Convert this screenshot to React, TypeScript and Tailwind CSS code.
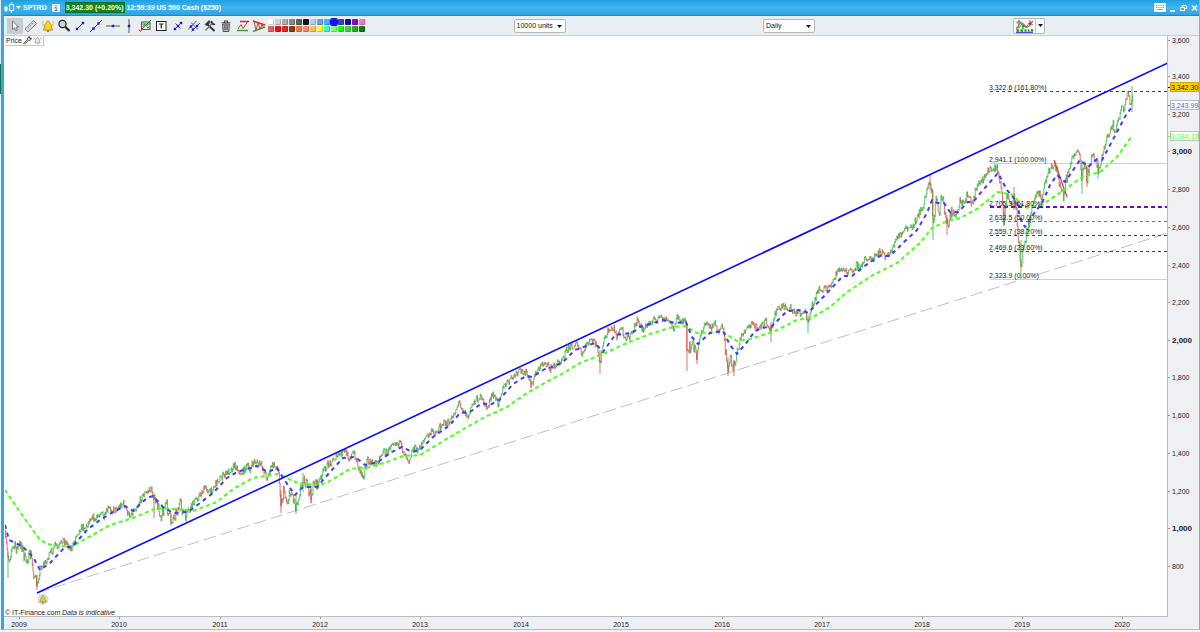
import type { ReactNode } from "react";

type Point = [number, number];

const closes: Point[] = [
  [5, 537], [7, 548], [9, 560], [11, 550], [15, 547], [18, 549], [21, 542], [25, 561], [31, 555], [33, 570], [37, 587], [40, 568],
  [45, 563], [49, 556], [55, 545], [58, 549], [63, 539], [72, 549], [77, 533], [82, 527], [86, 527], [92, 515],
  [95, 521], [101, 511], [104, 519], [108, 509], [115, 510], [123, 503], [129, 516], [137, 506], [143, 495], [151, 489],
  [154, 498], [161, 515], [166, 504], [171, 521], [180, 505], [186, 518], [193, 503], [200, 495], [206, 487],
  [210, 493], [218, 480], [227, 473], [235, 465], [241, 474], [247, 466], [250, 470], [254, 461], [262, 466],
  [267, 478], [272, 465], [277, 467], [279, 474], [281, 505], [284, 490], [287, 502], [291, 491], [296, 506],
  [303, 478], [307, 487], [311, 497], [315, 479], [317, 486], [325, 468], [335, 458], [345, 451], [349, 458],
  [354, 453], [359, 469], [363, 474], [367, 463], [377, 463], [383, 451], [388, 453], [392, 441], [400, 444],
  [404, 452], [409, 460], [413, 448], [419, 450], [423, 440], [432, 432], [437, 432], [442, 423], [450, 423],
  [459, 402], [463, 409], [468, 418], [473, 402], [480, 397], [487, 408], [493, 394], [498, 403], [503, 388],
  [510, 380], [520, 371], [526, 372], [531, 386], [537, 370], [545, 362], [550, 369], [560, 361], [567, 349], [577, 344],
  [582, 356], [587, 343], [593, 340], [597, 348], [600, 364], [603, 344], [608, 331], [614, 327], [617, 338],
  [621, 327], [625, 337], [630, 337], [637, 321], [643, 330], [650, 322], [660, 318], [670, 322], [674, 328],
  [677, 318], [686, 323], [687, 357], [690, 347], [693, 344], [697, 358], [700, 334], [707, 322], [710, 328],
  [715, 322], [719, 335], [723, 324], [725, 350], [728, 366], [731, 357], [733, 369], [737, 352], [742, 334],
  [753, 323], [758, 330], [766, 321], [771, 330], [775, 312], [783, 306], [790, 308], [795, 313], [805, 313],
  [808, 321], [813, 303], [818, 290], [830, 288], [838, 269], [848, 273], [857, 265], [860, 270], [865, 258],
  [873, 260], [880, 251], [887, 258], [898, 237], [905, 230], [912, 228], [918, 215], [923, 207], [927, 190],
  [930, 179], [932, 193], [933, 227], [936, 200], [939, 213], [942, 194], [947, 226], [952, 210], [956, 220],
  [960, 203], [965, 205], [967, 193], [972, 205], [977, 185], [983, 180], [988, 171], [997, 167], [1000, 183],
  [1002, 200], [1004, 219], [1007, 194], [1012, 207], [1014, 195], [1017, 217], [1019, 247], [1021, 272],
  [1023, 250], [1027, 230], [1031, 213], [1037, 190], [1042, 197], [1047, 174], [1054, 163], [1058, 177],
  [1063, 196], [1067, 177], [1073, 156], [1079, 149], [1082, 178], [1084, 161], [1087, 180], [1092, 154],
  [1099, 170], [1105, 144], [1113, 124], [1115, 132], [1122, 107], [1124, 112], [1128, 91], [1131, 108], [1133, 90],
];

const turbulent: Point[] = [[5, 36], [158, 190], [280, 318], [359, 368], [687, 700], [724, 738], [931, 960], [1000, 1030], [1056, 1068], [1081, 1100]];

const spikes: [number, number, number, "up" | "down"][] = [
  [8, 552, 578, "up"], [37, 575, 590, "down"], [154, 495, 518, "down"], [171, 515, 526, "up"], [281, 490, 513, "down"],
  [296, 495, 514, "up"], [303, 473, 492, "up"], [311, 485, 500, "down"], [600, 350, 374, "down"], [687, 325, 371, "down"],
  [697, 350, 364, "down"], [728, 358, 376, "down"], [734, 360, 376, "down"], [808, 315, 333, "up"], [771, 322, 342, "down"],
  [933, 190, 240, "up"], [947, 215, 235, "down"], [1021, 240, 279, "up"], [1014, 187, 210, "down"], [1082, 160, 194, "up"],
  [1087, 165, 187, "down"], [1098, 160, 179, "up"], [1004, 205, 226, "down"], [930, 175, 190, "down"], [1132, 86, 112, "up"],
];

const fastAverage: Point[] = [
  [5, 525], [9, 540], [22, 546], [33, 557], [40, 570], [50, 563], [65, 547], [72, 547], [87, 530], [100, 520],
  [113, 512], [125, 506], [133, 511], [147, 498], [153, 496], [163, 507], [173, 513], [188, 512], [200, 503],
  [213, 493], [227, 478], [237, 472], [257, 466], [268, 472], [277, 468], [283, 478], [295, 495], [303, 487],
  [317, 487], [330, 472], [343, 458], [355, 457], [365, 465], [378, 462], [390, 453], [402, 447], [412, 452],
  [420, 450], [433, 437], [450, 425], [460, 413], [470, 412], [482, 403], [490, 405], [499, 400], [513, 384],
  [526, 376], [532, 377], [545, 369], [553, 367], [563, 362], [575, 350], [595, 343], [603, 352], [615, 335], [632, 333],
  [640, 327], [663, 320], [675, 323], [686, 322], [692, 337], [698, 344], [710, 333], [723, 331], [730, 345],
  [737, 354], [747, 342], [755, 331], [763, 328], [772, 326], [787, 311], [802, 310], [808, 313], [827, 293],
  [843, 276], [852, 276], [863, 267], [880, 256], [890, 256], [903, 243], [917, 230], [927, 213], [932, 200],
  [937, 203], [944, 203], [950, 212], [958, 212], [968, 202], [973, 202], [983, 190], [998, 173], [1007, 190],
  [1017, 202], [1020, 218], [1025, 227], [1035, 212], [1042, 203], [1050, 185], [1057, 175], [1065, 182],
  [1080, 160], [1088, 167], [1097, 159], [1102, 160], [1117, 132], [1127, 113], [1133, 106],
];

const slowAverage: Point[] = [
  [5, 490], [20, 512], [40, 540], [53, 546], [73, 546], [87, 538], [110, 525], [133, 518], [157, 508], [173, 509],
  [193, 511], [217, 502], [233, 489], [253, 478], [278, 474], [300, 484], [320, 485], [328, 482], [350, 469],
  [370, 467], [387, 462], [403, 456], [420, 455], [440, 443], [467, 427], [487, 416], [507, 407], [527, 393],
  [548, 381], [560, 375], [580, 363], [603, 354], [627, 343], [650, 334], [673, 327], [685, 326], [697, 333],
  [723, 332], [737, 341], [750, 339], [773, 332], [797, 320], [813, 317], [830, 307], [847, 292], [873, 275],
  [897, 263], [920, 243], [932, 228], [947, 221], [960, 218], [977, 209], [998, 192], [1013, 195], [1025, 208],
  [1043, 204], [1067, 188], [1082, 177], [1100, 172], [1117, 157], [1132, 136],
];

const toPath = (pts: Point[]) => pts.map(([x, y], i) => `${i ? "L" : "M"}${x} ${y}`).join("");

function buildBars() {
  let seed = 7;
  const rand = () => {
    seed = (seed * 16807) % 2147483647;
    return seed / 2147483647;
  };
  let up = "";
  let down = "";
  let segment = 0;
  let previous = closes[0][1];
  for (let x = 5; x < 1133; x += 0.7) {
    while (segment < closes.length - 2 && closes[segment + 1][0] < x) segment++;
    const [x0, y0] = closes[segment];
    const [x1, y1] = closes[segment + 1];
    const base = y0 + ((y1 - y0) * (x - x0)) / (x1 - x0);
    const swing = turbulent.some(([from, to]) => x >= from && x <= to) ? 12 : 7;
    const close = base + (rand() - 0.5) * swing;
    const high = Math.min(previous, close) - rand() * 1.5;
    const low = Math.max(previous, close) + rand() * 1.5;
    const bar = `M${x.toFixed(1)} ${high.toFixed(1)}V${low.toFixed(1)}`;
    if (close < previous) up += bar;
    else down += bar;
    previous = close;
  }
  for (const [x, top, bottom, direction] of spikes) {
    const bar = `M${x} ${top}V${bottom}`;
    if (direction === "up") up += bar;
    else down += bar;
  }
  return { up, down };
}

const bars = buildBars();

const levels = [
  { y: 91, label: "3,322.6 (161.80%)", stroke: "#444444", dash: "3 3", width: 1 },
  { y: 163, label: "2,941.1 (100.00%)", stroke: "#cfcfcf", dash: undefined, width: 1 },
  { y: 207, label: "2,705.3 (61.80%)", stroke: "#8000c0", dash: "4 3", width: 2 },
  { y: 221, label: "2,632.5 (50.00%)", stroke: "#ff3a3a", dash: "3 3", width: 1 },
  { y: 235, label: "2,559.7 (38.20%)", stroke: "#444444", dash: "3 3", width: 1 },
  { y: 251, label: "2,469.6 (23.60%)", stroke: "#444444", dash: "3 3", width: 1 },
  { y: 279, label: "2,323.9 (0.00%)", stroke: "#cfcfcf", dash: undefined, width: 1 },
];

const prices: [string, number][] = [
  ["3,600", 40], ["3,400", 76], ["3,200", 114], ["3,000", 151], ["2,800", 189], ["2,600", 227], ["2,400", 265],
  ["2,200", 302], ["2,000", 340], ["1,800", 377], ["1,600", 415], ["1,400", 453], ["1,200", 491], ["1,000", 528],
  ["800", 566],
];

const years: [string, number][] = [
  ["2009", 19], ["2010", 119], ["2011", 220], ["2012", 320], ["2013", 420], ["2014", 521], ["2015", 621],
  ["2016", 722], ["2017", 822], ["2018", 922], ["2019", 1022], ["2020", 1122],
];

const tags = [
  { y: 87, label: "3,342.30", fill: "#ffcc00", border: "#d9a900", text: "#222222" },
  { y: 105, label: "3,243.99", fill: "#f8f8ff", border: "#b8bcc4", text: "#6464ff" },
  { y: 136, label: "3,084.12", fill: "#fbfff8", border: "#b8c4b8", text: "#5cff28" },
];

function Chart() {
  return (
    <svg viewBox="4 36 1195 593" className="block h-auto w-full bg-[#eef0f3]" role="img" aria-label="US 500 Cash daily price chart">
      <defs>
        <clipPath id="plot"><rect x="5" y="36" width="1162" height="580" /></clipPath>
      </defs>
      <rect x="4" y="36" width="1163" height="580" fill="#ffffff" />
      <path d="M1167.500 36V616.500H4" fill="none" stroke="#b9bdc1" />
      <g clipPath="url(#plot)" fill="none">
        <path d="M37 593L1168 233" stroke="#bfbfbf" strokeDasharray="12.5 5" />
        {levels.map((l) => (
          <path key={l.y} d={`M990 ${l.width === 1 ? l.y + 0.5 : l.y}H1167`} stroke={l.stroke} strokeWidth={l.width} strokeDasharray={l.dash} />
        ))}
        <path d={bars.down} stroke="#d83030" strokeWidth="0.7" />
        <path d={bars.up} stroke="#14b028" strokeWidth="0.7" />
        <path d="M1054 160L1067 197" stroke="#e03a3a" strokeWidth="1.2" />
        <path d={toPath(slowAverage)} stroke="#4dff1a" strokeWidth="2" strokeDasharray="4 3" strokeLinejoin="round" />
        <path d={toPath(fastAverage)} stroke="#3c3cff" strokeWidth="2" strokeDasharray="4 4" strokeLinejoin="round" />
        <path d="M37 593L1168 63" stroke="#0a0aff" strokeWidth="1.600" />
      </g>
      <g className="text-[7px]" fill="#222222">
        {levels.map((l) => (
          <text key={l.label} x="989" y={l.y - 1}>{l.label}</text>
        ))}
        <text x="5" y="615">© IT-Finance.com</text>
        <text x="62" y="615" fontStyle="italic">Data is indicative</text>
      </g>
      <g className="text-[7px]" fill="#222222">
        {prices.map(([label, y]) => {
          const major = label.endsWith(",000");
          return (
            <g key={label}>
              <path d={`M1168 ${y + 0.5}h2`} stroke="#9a9ea2" />
              <text x="1172" y={y + 3} className={major ? "text-[8px] font-bold" : "text-[7px]"}>{label}</text>
            </g>
          );
        })}
        {years.map(([label, x]) => (
          <g key={label}>
            <path d={`M${x + 0.5} 617v2`} stroke="#9a9ea2" />
            <text x={x} y="627" textAnchor="middle">{label}</text>
          </g>
        ))}
        {tags.map((t) => (
          <g key={t.label}>
            <path d={`M1168 ${t.y + 0.5}h2`} stroke={t.text} />
            <rect x="1170.500" y={t.y - 4.5} width="28" height="9" fill={t.fill} stroke={t.border} />
            <text x="1171" y={t.y + 3} fill={t.text}>{t.label}</text>
          </g>
        ))}
      </g>
      <g>
        <circle cx="43" cy="599.5" r="5" fill="#d5e8f3" stroke="#a9c3d3" strokeWidth="0.6" />
        <path d="M39.500 602c1.500-1 1-4.500 2.500-5.500.3-1.300 1.700-1.300 2 0 1.500 1 1 4.500 2.500 5.500z" fill="#e8cf1a" stroke="#8c7a10" strokeWidth="0.5" />
        <circle cx="43" cy="602.6" r="0.9" fill="#8c7a10" />
      </g>
    </svg>
  );
}

const dot = (x: number, y: number) => <rect key={`${x}-${y}`} x={x - 1.2} y={y - 1.2} width="2.4" height="2.4" fill="#1414ff" />;

const tools: { name: string; active?: boolean; art: ReactNode }[] = [
  { name: "Pointer", active: true, art: <path d="M5.500 3v8.500l2-1.800 1.400 3 1.500-.7-1.400-2.900h2.500z" fill="#f6f6f6" stroke="#666" strokeWidth="0.8" /> },
  {
    name: "Ruler",
    art: <g stroke="#777" strokeWidth="0.8" fill="#d6d6d6"><path d="M2 11L10.500 2.500l3 3L5 14z" /><path d="M4.500 8.500L5.800 9.800M6.500 6.500l1.300 1.300M8.500 4.500l1.300 1.300" /></g>,
  },
  {
    name: "Alert",
    art: <g><path d="M3 12c2-1.500 1-6 3.400-7.500.4-2 2.800-2 3.200 0C12 6 11 10.500 13 12z" fill="#ffd21a" stroke="#a98600" strokeWidth="0.8" /><path d="M6.500 12.400a1.500 1.500 0 003 0z" fill="#a06a00" /><path d="M3.500 3L2 5.500M12.500 3L14 5.500M3.500 6l-1 2M12.500 6l1 2" stroke="#c8a200" strokeWidth="0.8" /></g>,
  },
  { name: "Zoom", art: <g stroke="#222"><circle cx="6.500" cy="6" r="3.600" fill="#cfd8dd" strokeWidth="1.200" /><path d="M9.200 8.800l4.300 4.200" strokeWidth="2.200" /></g> },
  { name: "Segment", art: <g><path d="M5 11l6-6" stroke="#333" strokeWidth="0.9" />{dot(5, 11)}{dot(11, 5)}</g> },
  { name: "Line", art: <g><path d="M2 14L14 2" stroke="#333" />{dot(5.5, 10.5)}{dot(10.5, 5.5)}</g> },
  { name: "Horizontal line", art: <g><path d="M1 8h14" stroke="#555" />{dot(8, 8)}</g> },
  { name: "Vertical line", art: <g><path d="M8 1v14" stroke="#555" />{dot(8, 8)}</g> },
  {
    name: "Indicator",
    art: <g fill="none"><rect x="4.500" y="4" width="8.500" height="7.500" fill="#e3e8e3" stroke="#444" strokeWidth="0.9" /><path d="M5.500 9l2-2 2 1 3-3M5.500 6h4M10 9.500h2" stroke="#333" strokeWidth="0.8" /><path d="M4 12l10-10" stroke="#16a316" /><path d="M2 11.500l1.500 2L6 10" stroke="#e02020" /></g>,
  },
  { name: "Text", art: <g><rect x="3.500" y="3.500" width="9.500" height="9" fill="#fff" stroke="#222" /><path d="M6 6h4.500M8.250 6v4.500" stroke="#222" strokeWidth="1.200" /></g> },
  { name: "Cross lines", art: <g><path d="M4 12l8-8M5.500 5.500l5 5" stroke="#333" strokeWidth="0.8" />{dot(5, 11)}{dot(11, 5)}{dot(8, 8)}</g> },
  { name: "Channel", art: <g><path d="M2 11.500l8.500-8.500M5.500 13.500L14 5M5 4.500l7 7" stroke="#444" strokeWidth="0.9" />{dot(5, 8.5)}{dot(7, 11.5)}{dot(11, 8)}</g> },
  {
    name: "Settings",
    art: <g fill="none" stroke="#333"><path d="M5 6l7.500 7" strokeWidth="2" /><path d="M11 4.500l-7.500 8" strokeWidth="1.400" stroke="#777" /><path d="M3 6.500l4-4 1.500 1.500-3.500 3.500z" fill="#333" strokeWidth="0.7" /><path d="M10 3a2.200 2.200 0 003 3" strokeWidth="1.600" /></g>,
  },
  {
    name: "Delete",
    art: <g stroke="#444" fill="#bbb"><path d="M4.500 6l.7 7.500h5.600l.7-7.500z" strokeWidth="0.9" /><path d="M3.500 4.800h9M6.500 4.500V3h3v1.500" fill="none" strokeWidth="1.100" /><path d="M6.500 7l.3 5M8 7v5M9.500 7l-.3 5" strokeWidth="0.7" /></g>,
  },
  { name: "Range pattern", art: <g fill="none"><path d="M2 12.500h11" stroke="#20b030" strokeWidth="1.500" /><path d="M5 3.500h9" stroke="#e82020" strokeWidth="1.500" /><path d="M3 11l3-4.500 2 4 4.500-6.500" stroke="#c83030" strokeWidth="0.9" /></g> },
  { name: "Triangle pattern", art: <g fill="none"><path d="M2 3l12 4" stroke="#e82020" strokeWidth="1.500" /><path d="M2 13.500L14 9" stroke="#20b030" strokeWidth="1.500" /><path d="M3 3.500l2 8.500 2-7 2 6 2-4.500 1.500 3" stroke="#c83030" strokeWidth="0.9" /></g> },
];

const swatches: { name: string; tone: string; selected?: boolean }[] = [
  { name: "White", tone: "bg-[#ffffff]" }, { name: "Silver", tone: "bg-[#d2d2d2]" }, { name: "Light grey", tone: "bg-[#ababab]" },
  { name: "Grey", tone: "bg-[#888888]" }, { name: "Dark grey", tone: "bg-[#5c5c5c]" }, { name: "Black", tone: "bg-[#151515]" },
  { name: "Pale blue", tone: "bg-[#b8c8ff]" }, { name: "Light blue", tone: "bg-[#6f9cff]" }, { name: "Sky", tone: "bg-[#34b8fa]" },
  { name: "Blue", tone: "bg-[#1212ff]", selected: true }, { name: "Indigo", tone: "bg-[#3c3cc4]" }, { name: "Navy", tone: "bg-[#10109c]" },
  { name: "Purple", tone: "bg-[#8b08c4]" }, { name: "Pink", tone: "bg-[#ff74c0]" }, { name: "Rose", tone: "bg-[#df6464]" },
  { name: "Red", tone: "bg-[#ff0808]" }, { name: "Crimson", tone: "bg-[#df2424]" }, { name: "Brown", tone: "bg-[#864008]" },
  { name: "Orange", tone: "bg-[#ff7434]" }, { name: "Salmon", tone: "bg-[#ff8668]" }, { name: "Amber", tone: "bg-[#ffc044]" },
  { name: "Yellow", tone: "bg-[#ffff08]" }, { name: "Turquoise", tone: "bg-[#3cf8c4]" }, { name: "Mint", tone: "bg-[#80fc78]" },
  { name: "Lime", tone: "bg-[#08ff08]" }, { name: "Light green", tone: "bg-[#44cc44]" }, { name: "Green", tone: "bg-[#24a824]" },
  { name: "Dark green", tone: "bg-[#0a780a]" },
];

function Dropdown({ label, value }: { label: string; value: string }) {
  return (
    <div className="relative h-[14px] w-[52px] shrink-0">
      <select aria-label={label} defaultValue={value} className="block h-full w-full appearance-none rounded-[2px] border border-[#b3b9bd] bg-white pl-[2px] text-[7px] leading-[12px] text-[#111] outline-none">
        <option>{value}</option>
      </select>
      <svg viewBox="0 0 5 3" className="pointer-events-none absolute right-1 top-[6px] h-[3px] w-[5px]"><path d="M0 0h5L2.500 3z" fill="#111" /></svg>
    </div>
  );
}

function TitleBar() {
  return (
    <header className="flex h-4 items-center border-b border-[#1489cc] bg-linear-to-b from-[#1da0e0] via-[#41b5f3] to-[#2ca4e2] pr-px text-[7px] font-bold leading-none text-white">
      <svg viewBox="0 0 11 11" className="h-[11px] w-[11px]" fill="none" stroke="#fff">
        <path d="M2 4v6M7.500 0v2.500M7.500 8.500V11" /><rect x="0.500" y="5" width="3" height="3.500" fill="#fff" stroke="none" /><rect x="5.500" y="2.500" width="4" height="6" />
      </svg>
      <svg viewBox="0 0 5 3" className="mx-px h-[3px] w-[5px]"><path d="M0 0h5L2.500 3z" fill="#fff" /></svg>
      <span className="ml-px">SPTRD</span>
      <button type="button" aria-label="Instrument information" className="ml-[5px] flex h-2 w-2 items-center justify-center rounded-[1px] bg-[#e6f1f6]">
        <svg viewBox="0 0 8 8" className="h-2 w-2"><path d="M4 1v1.300M3 3.500h1.200v2.700M2.800 6.500h2.600" fill="none" stroke="#5f7c8b" /></svg>
      </button>
      <strong className="ml-[5px] flex h-[11px] items-center border border-[#0a6b1c] bg-[#12851c]">3,342.30 (+0.20%)</strong>
      <span className="ml-[2px]">12:59:39 US 500 Cash ($250)</span>
      <div className="ml-auto flex items-center gap-1">
        <button type="button" aria-label="Keyboard">
          <svg viewBox="0 0 12 9" className="block h-[9px] w-3"><rect width="12" height="9" rx="1" fill="#fff" /><path d="M2 2.500h8M2 4.500h8" stroke="#3aa6dd" strokeDasharray="1 0.750" /><path d="M3.500 6.500h5" stroke="#3aa6dd" /></svg>
        </button>
        <button type="button" aria-label="Minimize">
          <svg viewBox="0 0 6 8" className="block h-2 w-[6px]"><path d="M0 7h5" stroke="#fff" strokeWidth="1.500" /></svg>
        </button>
        <button type="button" aria-label="Restore">
          <svg viewBox="0 0 7 8" className="block h-2 w-[7px]" fill="none" stroke="#fff"><path d="M2.500 3V1.500h4v3H5" /><rect x="0.500" y="3.500" width="4" height="3" /></svg>
        </button>
        <button type="button" aria-label="Close">
          <svg viewBox="0 0 7 8" className="block h-2 w-[7px]"><path d="M1 1.500l5 5M6 1.500l-5 5" stroke="#fff" strokeWidth="1.500" /></svg>
        </button>
      </div>
    </header>
  );
}

function Toolbar() {
  return (
    <div role="toolbar" aria-label="Drawing tools" className="flex h-[19px] items-center bg-[#e9eef2] pl-[3px]">
      <div className="flex w-[260px] shrink-0 justify-between">
        {tools.map((t) => (
          <button key={t.name} type="button" aria-label={t.name} className={t.active ? "h-4 w-4 bg-[#c8cdd3]" : "h-4 w-4"}>
            <svg viewBox="0 0 16 16" className="block h-4 w-4">{t.art}</svg>
          </button>
        ))}
      </div>
      <div className="ml-px grid shrink-0 grid-cols-14 gap-px">
        {swatches.map((s) => (
          <button
            key={s.name}
            type="button"
            aria-label={s.name}
            className={`h-[6px] w-[6px] rounded-[1px] ${s.tone} ${s.selected ? "relative z-10 outline outline-[#1212ff]" : "border-b border-r border-black/20"}`}
          />
        ))}
      </div>
      <div className="grow-[149]" />
      <Dropdown label="Number of units" value="10000 units" />
      <div className="grow-[198]" />
      <Dropdown label="Timeframe" value="Daily" />
      <div className="grow-[199]" />
      <div className="flex h-4 shrink-0 rounded-[2px] border border-[#b3b9bd] bg-[#fafbfb]">
        <button type="button" aria-label="Add indicator" className="flex items-center border-r border-[#c4c9cc] px-px">
          <svg viewBox="0 0 19 14" className="block h-[14px] w-[19px]" fill="none">
            <path d="M1 10c3-1 3-7 6-6s3 5 6 4 3-5 5-6" stroke="#d84848" strokeWidth="1.200" /><path d="M1 8l3 1 3-4 4 4 3-5 4 2" stroke="#42a35a" />
            <path d="M1 13.300h17" stroke="#2424d0" /><path d="M1.500 11.500h2.500M5.500 11.500h2.500M9.500 11.500h2M13 11.500h1.500M16 11.500h2" stroke="#08a808" strokeWidth="2.400" />
            <path d="M4 1v5M1.500 3.500h5" stroke="#7e969a" strokeWidth="1.800" /><path d="M8 10V7M7 8l1-1.500L9 8" stroke="#08a808" strokeWidth="1.200" /><path d="M15 1.500v3M14 4l1 1.500L16 4" stroke="#e01818" strokeWidth="1.200" />
          </svg>
        </button>
        <button type="button" aria-label="Indicator options" className="flex w-2 items-center justify-center">
          <svg viewBox="0 0 5 3" className="block h-[3px] w-[5px]"><path d="M0 0h5L2.500 3z" fill="#111" /></svg>
        </button>
      </div>
      <div className="grow-[154]" />
    </div>
  );
}

export default function App() {
  return (
    <div className="flex min-h-screen items-start bg-[#f4f5f6] font-['Liberation_Sans',Arial,sans-serif] text-[#222]">
      <div className="flex w-px shrink-0 flex-col bg-[#e4e8ea] pt-16">
        <span className="h-[30px] bg-[#1f6e48]" />
      </div>
      <div className="min-w-0 flex-1 border-b border-l-[3px] border-r border-b-[#b8bcc0] border-l-[#2fa8e4] border-r-[#65b8e8]">
        <TitleBar />
        <Toolbar />
        <main className="relative border-t border-[#c9cdd0]">
          <Chart />
          <div className="absolute left-px top-0 flex h-[10px] items-center gap-px border-b border-r border-[#c4c8cb] bg-white px-px text-[7px] leading-none">
            <span>Price</span>
            <button type="button" aria-label="Price settings">
              <svg viewBox="0 0 10 10" className="block h-[9px] w-[9px]" fill="none" stroke="#222"><path d="M1.500 9l-.8-.8L5 4c-.5-2 1-3.500 3-3L6.500 2.500l1 1L9 2c.5 2-1 3.500-3 3z" strokeWidth="0.900" fill="#fff" /></svg>
            </button>
            <button type="button" aria-label="Price alerts">
              <svg viewBox="0 0 10 10" className="block h-[9px] w-[9px]" fill="#eee" stroke="#777" strokeWidth="0.700"><path d="M2 7.500c1.200-1 .5-4 2-5 .3-1.200 1.700-1.200 2 0 1.500 1 .8 4 2 5z" /><path d="M4.200 8.500h1.600M1.500 1.500L.8 4M8.500 1.500L9.200 4" /></svg>
            </button>
          </div>
        </main>
      </div>
    </div>
  );
}
